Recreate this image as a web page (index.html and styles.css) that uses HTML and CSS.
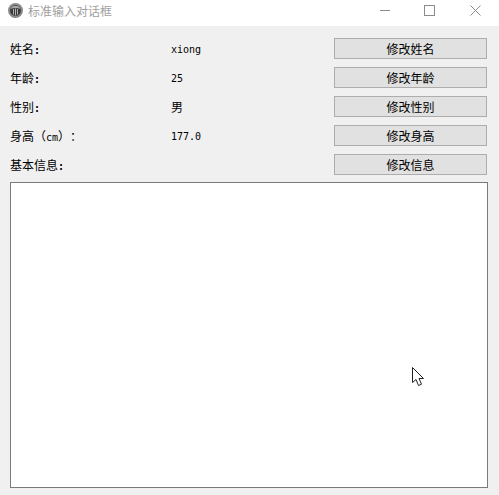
FILE: index.html
```html
<!DOCTYPE html>
<html lang="zh-CN">
<head>
<meta charset="utf-8">
<title>标准输入对话框</title>
<link rel="stylesheet" href="styles.css">
</head>
<body>
<div class="window">
  <header class="titlebar">
    <svg class="app-icon" width="15" height="15" viewBox="0 0 15 15">
      <circle cx="7.5" cy="7.5" r="7.5" fill="#8c8c8c"/>
      <path d="M.6 9.5A7.2 7.2 0 0 0 14.4 9.5C14 12 11 14.6 7.5 14.6S1 12 .6 9.5Z" fill="#1c1c1c"/>
      <circle cx="7.5" cy="7.5" r="5.4" fill="#3a3a3a"/>
      <path d="M2.6 6A5.4 5.4 0 0 1 12.4 6C9.5 4.6 5.5 4.6 2.6 6Z" fill="#a8a8a8"/>
      <path d="M5 6h1v5.5H5zM7 5.5h1v7H7zM9 6h1v5.5H9z" fill="#b0b0b0"/>
    </svg>
    <span class="title">标准输入对话框</span>
    <div class="controls">
      <svg class="ctl" width="11" height="11" viewBox="0 0 11 11"><path d="M2 5.5H12" stroke="#8a8a8a" fill="none"/></svg>
      <svg class="ctl" width="11" height="11" viewBox="0 0 11 11"><rect x=".5" y=".5" width="10" height="10" stroke="#8a8a8a" fill="none"/></svg>
      <svg class="ctl" width="11" height="11" viewBox="0 0 11 11"><path d="M.5 .5L10.5 10.5M10.5 .5L.5 10.5" stroke="#8a8a8a" fill="none"/></svg>
    </div>
  </header>
  <main class="content">
    <div class="form">
      <span>姓名<span class="colon">:</span></span><span class="value">xiong</span><button>修改姓名</button>
      <span>年龄<span class="colon">:</span></span><span class="value">25</span><button>修改年龄</button>
      <span>性别<span class="colon">:</span></span><span>男</span><button>修改性别</button>
      <span>身高（<span class="unit">cm</span>）：</span><span class="value">177.0</span><button>修改身高</button>
      <span>基本信息<span class="colon">:</span></span><span></span><button>修改信息</button>
    </div>
    <div class="output"></div>
  </main>
  <svg class="cursor" width="14" height="21" viewBox="0 0 14 21">
    <path d="M1.5 1.5V16.5L5 13.5L7.5 19.5L10.5 18.2L8 12.5H12.5Z" fill="#fff" stroke="#222" stroke-width="1"/>
  </svg>
</div>
</body>
</html>
```
FILE: styles.css
```css
* { box-sizing: border-box; }
html, body { margin: 0; height: 100%; }
body {
  background: #f0f0f0;
  font-family: "Noto Sans CJK SC", "Liberation Sans", sans-serif;
  font-size: 12px;
  color: #000;
  text-spacing-trim: space-all;
  font-kerning: none;
}
.window { position: relative; width: 499px; height: 495px; overflow: hidden; }
.titlebar {
  display: flex;
  align-items: center;
  height: 26px;
  background: #fff;
  padding: 0 0 0 8px;
}
.app-icon { flex: none; margin-top: -6px; }
.title { margin-left: 5px; margin-top: -5px; color: #a0a0a0; }
.controls {
  margin-left: auto;
  display: flex;
  gap: 35px;
  padding-right: 18px;
  margin-top: -5px;
}
.ctl { display: block; overflow: visible; }
.content { padding: 12px 11px 7px 10px; }
.form {
  display: grid;
  grid-template-columns: 161px 163px 153px;
  grid-auto-rows: 21px;
  row-gap: 8px;
  align-items: center;
}
.colon { font-family: "DejaVu Sans Mono", monospace; font-size: 10px; font-weight: bold; }
.unit { font-family: "DejaVu Sans Mono", monospace; font-size: 10px; }
.value { font-family: "DejaVu Sans Mono", monospace; font-size: 10px; padding-top: 1px; }
button {
  height: 21px;
  padding: 0;
  font: inherit;
  color: #000;
  background: #e1e1e1;
  border: 1px solid #adadad;
  border-radius: 0;
}
.output {
  width: 478px;
  height: 306px;
  margin-top: 7px;
  background: #fff;
  border: 1px solid #7a7a7a;
}
.cursor { position: absolute; left: 411px; top: 366px; }
```
